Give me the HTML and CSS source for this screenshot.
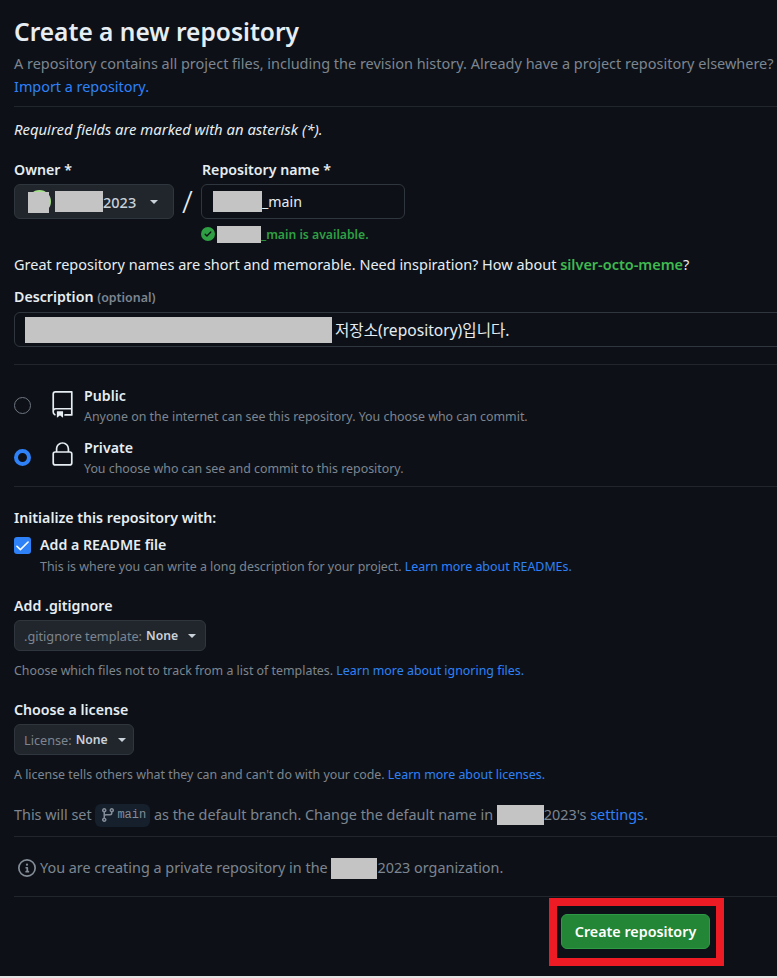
FILE: index.html
```html
<!DOCTYPE html>
<html lang="en">
<head>
<meta charset="utf-8">
<title>Create a new repository</title>
<link rel="stylesheet" href="styles.css">
</head>
<body>
<main class="page">
  <header class="head">
    <h1 class="title">Create a new repository</h1>
    <p class="lead">A repository contains all project files, including the revision history. Already have a project repository elsewhere?</p>
    <a class="link lead-link" href="#">Import a repository.</a>
  </header>
  <p class="required">Required fields are marked with an asterisk (*).</p>
  <div class="name-row">
    <div class="owner-col">
      <label class="label">Owner *</label>
      <div class="owner-select">
        <span class="avatar"><span class="avatar-mask"></span></span>
        <span class="mask mask-owner"></span><span class="owner-text">2023</span>
        <span class="caret owner-caret"></span>
      </div>
    </div>
    <span class="slash">/</span>
    <div class="repo-col">
      <label class="label">Repository name *</label>
      <div class="repo-input"><span class="mask mask-repo"></span>_main</div>
      <div class="available">
        <svg class="ok-icon" viewBox="0 0 16 16" width="16" height="16"><path fill="#2ea043" d="M8 16A8 8 0 1 1 8 0a8 8 0 0 1 0 16Zm3.78-9.72a.75.75 0 0 0-1.06-1.06L6.75 9.19 5.28 7.72a.75.75 0 0 0-1.06 1.06l2 2a.75.75 0 0 0 1.06 0l4.5-4.5Z"/></svg>
        <span class="mask mask-avail"></span>_main is available.
      </div>
    </div>
  </div>
  <p class="suggest">Great repository names are short and memorable. Need inspiration? How about <a class="green-link" href="#">silver-octo-meme</a>?</p>
  <label class="label desc-label">Description <span class="optional">(optional)</span></label>
  <div class="desc-input"><span class="mask mask-desc"></span>저장소(repository)입니다.</div>
  <hr class="rule rule-a">
  <div class="vis vis-public">
    <span class="radio"></span>
    <svg class="vis-icon icon-repo" viewBox="0 0 24 24" width="27" height="27"><path fill="#e6edf3" d="M3 2.75A2.75 2.75 0 0 1 5.75 0h14.5a.75.75 0 0 1 .75.75v20.5a.75.75 0 0 1-.75.75h-6a.75.75 0 0 1 0-1.5h5.25v-4H6A1.5 1.5 0 0 0 4.5 18v.75c0 .716.43 1.334 1.05 1.605a.75.75 0 0 1-.6 1.374A3.251 3.251 0 0 1 3 18.75ZM19.5 1.5H5.75c-.69 0-1.25.56-1.25 1.25v12.651A2.989 2.989 0 0 1 6 15h13.5Z"/><path fill="#e6edf3" d="M7 18.25a.25.25 0 0 1 .25-.25h5a.25.25 0 0 1 .25.25v5.01a.25.25 0 0 1-.397.201l-2.206-1.604a.25.25 0 0 0-.294 0L7.397 23.46a.25.25 0 0 1-.397-.2Z"/></svg>
    <div class="vis-text">
      <div class="vis-title">Public</div>
      <div class="vis-desc">Anyone on the internet can see this repository. You choose who can commit.</div>
    </div>
  </div>
  <div class="vis vis-private">
    <span class="radio radio-on"></span>
    <svg class="vis-icon icon-lock" viewBox="0 0 24 24" width="27" height="27"><path fill="#e6edf3" d="M6 9V7.25C6 3.845 8.503 1 12 1s6 2.845 6 6.25V9h.5a2.5 2.5 0 0 1 2.5 2.5v8a2.5 2.5 0 0 1-2.5 2.5h-13A2.5 2.5 0 0 1 3 19.5v-8A2.5 2.5 0 0 1 5.5 9Zm-1.5 2.5v8a1 1 0 0 0 1 1h13a1 1 0 0 0 1-1v-8a1 1 0 0 0-1-1h-13a1 1 0 0 0-1 1Zm3-4.25V9h9V7.25c0-2.67-1.922-4.75-4.5-4.75-2.578 0-4.5 2.08-4.5 4.75Z"/></svg>
    <div class="vis-text">
      <div class="vis-title">Private</div>
      <div class="vis-desc">You choose who can see and commit to this repository.</div>
    </div>
  </div>
  <hr class="rule rule-b">
  <div class="label init-label">Initialize this repository with:</div>
  <div class="readme">
    <span class="checkbox"><svg viewBox="0 0 16 16" width="17" height="17"><path fill="#fff" d="M13.78 4.22a.75.75 0 0 1 0 1.06l-7.25 7.25a.75.75 0 0 1-1.06 0L2.22 9.28a.75.75 0 0 1 1.06-1.06L6 10.94l6.72-6.72a.75.75 0 0 1 1.06 0Z"/></svg></span>
    <span class="label">Add a README file</span>
  </div>
  <p class="note readme-note">This is where you can write a long description for your project. <a class="link" href="#">Learn more about READMEs.</a></p>
  <div class="label ignore-label">Add .gitignore</div>
  <div class="pick pick-ignore"><span class="pick-key">.gitignore template:</span><b class="pick-val">None</b><span class="caret"></span></div>
  <p class="note ignore-note">Choose which files not to track from a list of templates. <a class="link" href="#">Learn more about ignoring files.</a></p>
  <div class="label license-label">Choose a license</div>
  <div class="pick pick-license"><span class="pick-key">License:</span><b class="pick-val">None</b><span class="caret"></span></div>
  <p class="note license-note">A license tells others what they can and can't do with your code. <a class="link" href="#">Learn more about licenses.</a></p>
  <p class="branch">This will set <span class="branch-chip"><svg viewBox="0 0 16 16" width="16" height="16"><path fill="#848d97" d="M9.5 3.25a2.25 2.25 0 1 1 3 2.122V6A2.5 2.5 0 0 1 10 8.5H6a1 1 0 0 0-1 1v1.128a2.251 2.251 0 1 1-1.5 0V5.372a2.25 2.25 0 1 1 1.5 0v1.836A2.493 2.493 0 0 1 6 7h4a1 1 0 0 0 1-1v-.628A2.25 2.25 0 0 1 9.5 3.25Zm-6 0a.75.75 0 1 0 1.5 0 .75.75 0 0 0-1.5 0Zm8.25-.75a.75.75 0 1 0 0 1.5.75.75 0 0 0 0-1.5ZM4.25 12a.75.75 0 1 0 0 1.5.75.75 0 0 0 0-1.5Z"/></svg><span class="branch-name">main</span></span> as the default branch. Change the default name in <span class="mask mask-branch"></span>2023's <a class="link" href="#">settings</a>.</p>
  <hr class="rule rule-c">
  <p class="info"><svg class="info-icon" viewBox="0 0 16 16" width="18" height="18"><path fill="#848d97" d="M0 8a8 8 0 1 1 16 0A8 8 0 0 1 0 8Zm8-6.5a6.5 6.5 0 1 0 0 13 6.5 6.5 0 0 0 0-13ZM6.5 7.75A.75.75 0 0 1 7.25 7h1a.75.75 0 0 1 .75.75v2.75h.25a.75.75 0 0 1 0 1.5h-2a.75.75 0 0 1 0-1.5h.25v-2h-.25a.75.75 0 0 1-.75-.75ZM8 6a1 1 0 1 1 0-2 1 1 0 0 1 0 2Z"/></svg>You are creating a private repository in the <span class="mask mask-org"></span>2023 organization.</p>
  <hr class="rule rule-d">
  <div class="actions">
    <div class="highlight"><button class="create" type="button">Create repository</button></div>
  </div>
</main>
<div class="bottom-strip"></div>
</body>
</html>
```
FILE: styles.css
```css
* { box-sizing: border-box; }
html, body { margin: 0; height: 978px; overflow: hidden; background: #0d1117; }
body { font-family: "Noto Sans", "Noto Sans CJK KR", sans-serif; font-size: 13px; color: #e6edf3; position: relative; }
p { margin: 0; }
a { text-decoration: none; }
.page { width: 777px; height: 976px; overflow: hidden; padding: 0 0 0 14px; }
.link { color: #2f81f7; }
.mask { display: inline-block; background: #c4c4c4; vertical-align: middle; }

.head { padding-top: 16px; }
.title { margin: 0; font-size: 24.5px; line-height: 32px; font-weight: 600; color: #e6edf3; }
.lead { margin-top: 4px; font-size: 14.48px; line-height: 24px; color: #7d8590; white-space: nowrap; }
.lead-link { display: block; margin-top: -1px; font-size: 14.4px; line-height: 24px; }
.required { padding-top: 11px; border-top: 1px solid #21262d; margin-top: 7px; width: 763px; line-height: 22px; font-style: italic; font-size: 14.85px; color: #e6edf3; }

.name-row { display: flex; margin-top: 20px; align-items: flex-start; }
.label { font-size: 14.2px; font-weight: 600; line-height: 20px; color: #e6edf3; display: block; }
.owner-col { width: 160px; }
.owner-select { margin-top: 4px; height: 35px; background: #21262d; border: 1px solid #30363d; border-radius: 6px; display: flex; align-items: center; padding-left: 13px; font-size: 14.5px; font-weight: 500; color: #c9d1d9; }
.avatar { width: 23px; height: 23px; border-radius: 50%; background: #a5e08a; position: relative; display: block; flex: none; }
.avatar-mask { position: absolute; left: 0; top: 2px; width: 21px; height: 21px; background: #c4c4c4; }
.mask-owner { width: 48px; height: 21px; margin-left: 4px; }
.owner-text { color: #c9d1d9; }
.owner-caret { margin-left: 14px; }
.caret { display: inline-block; width: 0; height: 0; border-left: 4px solid transparent; border-right: 4px solid transparent; border-top: 4px solid currentColor; }
.slash { width: 27px; text-align: center; font-size: 31px; line-height: 35px; margin-top: 24px; color: #e6edf3; font-weight: 300; }
.repo-col { width: 204px; }
.repo-col .label { margin-left: 1px; }
.repo-input { margin-top: 4px; height: 35px; border: 1px solid #30363d; border-radius: 6px; display: flex; align-items: center; padding-left: 11px; font-size: 14.2px; color: #e6edf3; }
.mask-repo { width: 49px; height: 21px; }
.available { display: flex; align-items: center; margin-top: 4px; height: 22px; font-size: 12.2px; font-weight: 600; color: #2ea043; white-space: nowrap; }
.ok-icon { width: 14px; height: 14px; flex: none; }
.mask-avail { width: 44px; height: 17px; margin-left: 2px; }
.suggest { margin-top: 10px; font-size: 14.48px; line-height: 20px; color: #e6edf3; white-space: nowrap; }
.green-link { color: #3fb950; font-weight: 600; }
.desc-label { margin-top: 12px; }
.optional { font-size: 12.4px; color: #7d8590; font-weight: 600; }
.desc-input { margin-top: 4px; height: 35px; width: 800px; border: 1px solid #30363d; border-radius: 6px; display: flex; align-items: center; padding-left: 10px; font-size: 15.6px; color: #e6edf3; }
.mask-desc { width: 307px; height: 26px; margin-right: 3px; }

.rule { border: 0; height: 1px; width: 763px; background: #21262d; margin: 0; }
.rule-a { margin-top: 17px; }
.vis { display: flex; align-items: flex-start; height: 40px; }
.vis-public { margin-top: 21px; }
.vis-private { margin-top: 12px; }
.radio { width: 17px; height: 17px; border-radius: 50%; border: 1px solid #6e7681; margin-top: 11px; flex: none; }
.radio-on { border: 4px solid #2f81f7; }
.vis-icon { margin-left: 17.6px; flex: none; }
.icon-repo { margin-top: 5px; }
.icon-lock { margin-top: 3px; }
.vis-text { margin-left: 8.4px; }
.vis-title { font-size: 14.2px; font-weight: 600; line-height: 20px; color: #e6edf3; }
.vis-desc { margin-top: 1px; font-size: 12.4px; line-height: 19px; color: #7d8590; white-space: nowrap; }
.rule-b { margin-top: 8px; }
.init-label { margin-top: 21px; }
.readme { display: flex; align-items: center; margin-top: 7px; height: 20px; }
.checkbox { width: 17px; height: 17px; background: #2f81f7; border-radius: 3px; display: flex; align-items: center; justify-content: center; margin-right: 9px; flex: none; }
.note { font-size: 12.4px; line-height: 20px; color: #7d8590; white-space: nowrap; }
.readme-note { margin: 2px 0 0 26px; }
.ignore-label { margin-top: 19px; }
.pick { display: flex; align-items: center; height: 31px; margin-top: 4px; background: #21262d; border: 1px solid #30363d; border-radius: 6px; padding: 0 9px; font-size: 12.7px; color: #7d8590; white-space: nowrap; }
.pick-ignore { width: 192px; }
.pick-license { width: 120px; }
.pick-val { color: #c9d1d9; font-size: 12.2px; font-weight: 600; margin-left: 4px; }
.pick .caret { margin-left: 10px; color: #c9d1d9; }
.ignore-note { margin-top: 10px; }
.license-note { margin-top: 10px; }
.license-label { margin-top: 19px; }
.branch { margin-top: 18px; font-size: 14.4px; line-height: 24px; color: #7d8590; display: flex; align-items: center; white-space: pre; }
.branch-chip { display: inline-flex; align-items: center; background: #161f2c; border-radius: 6px; height: 23px; padding: 0 4px 0 5px; }
.branch-name { font-family: "Liberation Mono", monospace; font-size: 12px; color: #848d97; margin-left: 1px; }
.mask-branch { width: 47px; height: 20px; }
.rule-c { margin-top: 9px; }
.info { margin-top: 19px; padding-left: 4px; font-size: 14.4px; line-height: 24px; color: #7d8590; display: flex; align-items: center; white-space: pre; }
.info-icon { margin-right: 4px; }
.mask-org { width: 46px; height: 21px; }
.rule-d { margin-top: 16px; }
.actions { width: 710px; display: flex; justify-content: flex-end; margin-top: 1px; }
.highlight { border: 8px solid #ed1c24; width: 175px; height: 68px; padding: 8px 0 0 4px; }
.create { display: block; width: 149px; height: 35px; background: #238636; border: 1px solid #2e9a45; border-radius: 6px; color: #fff; font: 600 14.3px "Noto Sans", sans-serif; padding: 0; }
.bottom-strip { position: absolute; left: 0; right: 0; bottom: 0; height: 2px; background: #e4e4e4; }
```
